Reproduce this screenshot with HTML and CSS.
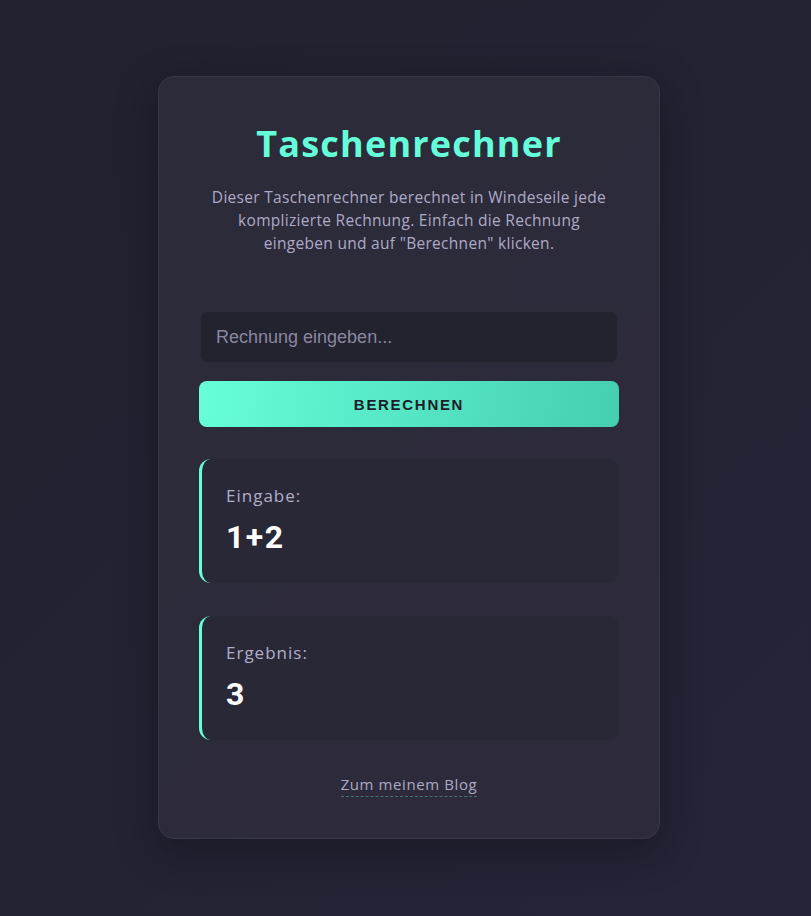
FILE: index.html
```html
<!DOCTYPE html>
<html lang="de">
<head>
<meta charset="utf-8">
<title>Taschenrechner</title>
<link rel="stylesheet" href="styles.css">
</head>
<body>
<main class="card">
  <h1 class="title">Taschenrechner</h1>
  <p class="intro">Dieser Taschenrechner berechnet in Windeseile jede komplizierte Rechnung. Einfach die Rechnung eingeben und auf "Berechnen" klicken.</p>
  <form class="calc">
    <input class="calc-input" type="text" placeholder="Rechnung eingeben...">
    <button class="calc-button" type="button">BERECHNEN</button>
  </form>
  <section class="result">
    <div class="result-label">Eingabe:</div>
    <div class="result-value">1+2</div>
  </section>
  <section class="result">
    <div class="result-label">Ergebnis:</div>
    <div class="result-value">3</div>
  </section>
  <div class="footer">
    <a class="blog-link" href="#">Zum meinem Blog</a>
  </div>
</main>
</body>
</html>
```
FILE: styles.css
```css
* { box-sizing: border-box; }
html, body { height: 100%; }
body {
  margin: 0;
  background: linear-gradient(135deg, #22212f 0%, #252538 100%);
  font-family: "Open Sans", "Noto Sans", sans-serif;
  display: flex;
  justify-content: center;
  align-items: flex-start;
  padding: 76px 0 0 7px;
}
.card {
  width: 502px;
  background: linear-gradient(135deg, #2c2b3a 0%, #2d2b3b 100%);
  border: 1px solid #38374a;
  border-radius: 16px;
  box-shadow: 0 12px 40px rgba(10, 10, 20, 0.45);
  padding: 44px 40px 43px;
  display: flex;
  flex-direction: column;
}
.title {
  margin: 0;
  text-align: center;
  color: #64ffda;
  font-size: 36px;
  font-weight: 700;
  line-height: 46px;
  letter-spacing: 1.2px;
}
.intro {
  margin: 19px auto 0;
  max-width: 410px;
  text-align: center;
  color: #aeaac6;
  font-size: 15.5px;
  line-height: 23px;
  letter-spacing: 0.3px;
}
.calc {
  margin-top: 56px;
  display: flex;
  flex-direction: column;
  gap: 18px;
}
.calc-input {
  height: 52px;
  margin: 0 1px;
  background: #23222f;
  border: 1px solid #2a2937;
  border-radius: 8px;
  padding: 0 15px;
  font-family: "Liberation Sans", Arial, sans-serif;
  font-size: 18px;
  color: #e0def0;
  outline: none;
}
.calc-input::placeholder { color: #8a879f; }
.calc-button {
  height: 46px;
  border: 0;
  border-radius: 8px;
  background: linear-gradient(100deg, #66ffd8 0%, #55e6c6 50%, #45cfb0 100%);
  font-family: "Liberation Sans", Arial, sans-serif;
  font-weight: 700;
  font-size: 15px;
  letter-spacing: 1.7px;
  color: #1d1c28;
}
.result {
  margin-top: 32px;
  background: #282836;
  border-left: 3px solid #64ffda;
  border-radius: 12px;
  padding: 25px 24px 24px;
  min-height: 124px;
}
.result + .result { margin-top: 33px; }
.result-label {
  color: #b1aeca;
  font-size: 17px;
  font-weight: 500;
  line-height: 24px;
  letter-spacing: 1px;
}
.result-value {
  margin-top: 10px;
  color: #ffffff;
  font-family: "Roboto", "Liberation Sans", sans-serif;
  font-weight: 700;
  font-size: 32px;
  line-height: 38px;
  letter-spacing: 1.5px;
}
.footer {
  margin-top: 33px;
  text-align: center;
}
.blog-link {
  color: #aeaac6;
  font-size: 15px;
  line-height: 22px;
  letter-spacing: 0.6px;
  text-decoration: none;
  border-bottom: 1px dashed rgba(100, 255, 218, 0.35);
  padding-bottom: 2px;
}
```
